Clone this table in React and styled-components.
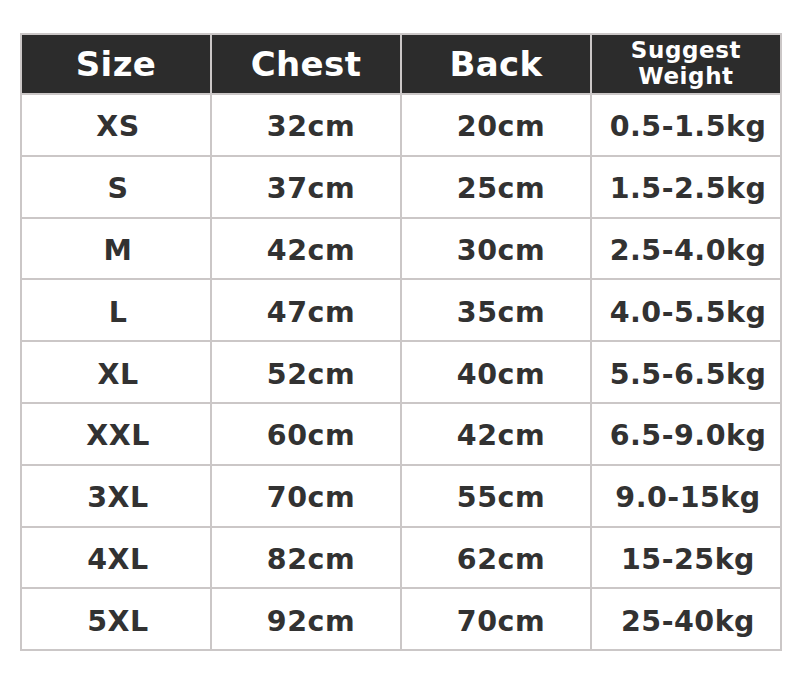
import React from "react";
import styled, { createGlobalStyle } from "styled-components";

const Global = createGlobalStyle`
  html, body { margin: 0; padding: 0; background: #ffffff; }
  body { font-family: "DejaVu Sans", Verdana, sans-serif; }
`;

const Page = styled.div`
  width: 800px;
  height: 680px;
  box-sizing: border-box;
  padding: 33px 18px 0 20px;
  background: #ffffff;
`;

const Grid = styled.div`
  display: grid;
  grid-template-columns: repeat(4, 188px);
  grid-template-rows: 58px repeat(9, 59.8px);
  gap: 2px;
  padding: 2px;
  width: 762px;
  box-sizing: border-box;
  background: #cbc7c7;
`;

const HeadCell = styled.div`
  background: #2c2c2c;
  color: #ffffff;
  font-weight: bold;
  font-size: ${(p) => (p.$small ? "23px" : "34px")};
  line-height: ${(p) => (p.$small ? "26px" : "1")};
  letter-spacing: ${(p) => (p.$small ? "0.6px" : "0.4px")};
  display: flex;
  align-items: center;
  justify-content: center;
  text-align: center;
  padding-bottom: ${(p) => (p.$small ? "3px" : "0")};
`;

const Cell = styled.div`
  background: #ffffff;
  color: #323232;
  font-weight: bold;
  font-size: 28.5px;
  letter-spacing: 0.5px;
  display: flex;
  align-items: center;
  justify-content: center;
  padding-top: 4px;
  padding-left: ${(p) => p.$shift || 0}px;
  box-sizing: border-box;
`;

const rows = [
  ["XS", "32cm", "20cm", "0.5-1.5kg"],
  ["S", "37cm", "25cm", "1.5-2.5kg"],
  ["M", "42cm", "30cm", "2.5-4.0kg"],
  ["L", "47cm", "35cm", "4.0-5.5kg"],
  ["XL", "52cm", "40cm", "5.5-6.5kg"],
  ["XXL", "60cm", "42cm", "6.5-9.0kg"],
  ["3XL", "70cm", "55cm", "9.0-15kg"],
  ["4XL", "82cm", "62cm", "15-25kg"],
  ["5XL", "92cm", "70cm", "25-40kg"],
];

const shifts = [4, 10, 10, 4];

export default function App() {
  return (
    <>
      <Global />
      <Page>
        <Grid>
          <HeadCell>Size</HeadCell>
          <HeadCell>Chest</HeadCell>
          <HeadCell>Back</HeadCell>
          <HeadCell $small>
            Suggest
            <br />
            Weight
          </HeadCell>
          {rows.map((r) =>
            r.map((v, i) => (
              <Cell key={r[0] + i} $shift={shifts[i]}>
                {v}
              </Cell>
            ))
          )}
        </Grid>
      </Page>
    </>
  );
}
